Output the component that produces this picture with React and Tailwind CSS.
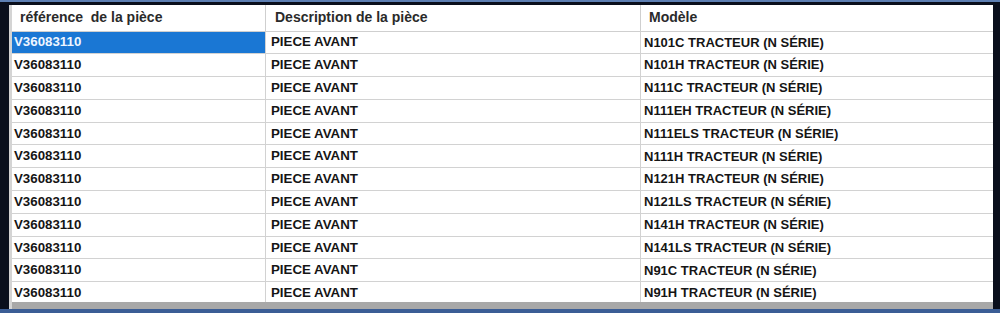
const models = [
  "N101C TRACTEUR (N SÉRIE)",
  "N101H TRACTEUR (N SÉRIE)",
  "N111C TRACTEUR (N SÉRIE)",
  "N111EH TRACTEUR (N SÉRIE)",
  "N111ELS TRACTEUR (N SÉRIE)",
  "N111H TRACTEUR (N SÉRIE)",
  "N121H TRACTEUR (N SÉRIE)",
  "N121LS TRACTEUR (N SÉRIE)",
  "N141H TRACTEUR (N SÉRIE)",
  "N141LS TRACTEUR (N SÉRIE)",
  "N91C TRACTEUR (N SÉRIE)",
  "N91H TRACTEUR (N SÉRIE)",
];

export default function App() {
  return (
    <div
      className="w-[1000px] h-[313px] bg-[#0a0f1c] flex flex-col overflow-hidden"
      style={{ fontFamily: '"Liberation Sans", Arial, sans-serif' }}
    >
      <div className="h-[2px] bg-[#5d7fb3] shrink-0" />
      <div className="h-[3px] shrink-0" />
      <div className="flex flex-1 min-h-0">
        <div className="w-[9px] shrink-0" />
        <div className="w-[3px] bg-[#d4d4d4] shrink-0" />
        <div className="flex-1 flex flex-col bg-white min-w-0">
          <div className="flex-1 min-h-0 overflow-hidden grid grid-cols-[254px_375px_1fr] content-start">
            <div className="h-[26.5px] flex items-center pl-[8px] border-b border-r border-[#cfcfcf] text-[14px] font-bold text-[#2a2a2a] whitespace-pre">
              {"référence  de la pièce"}
            </div>
            <div className="h-[26.5px] flex items-center pl-[9px] border-b border-r border-[#cfcfcf] text-[14px] font-bold text-[#2a2a2a]">
              Description de la pièce
            </div>
            <div className="h-[26.5px] flex items-center pl-[8px] border-b border-[#cfcfcf] text-[14px] font-bold text-[#2a2a2a]">
              Modèle
            </div>
            {models.map((m, i) => (
              <Row key={m} model={m} selected={i === 0} />
            ))}
          </div>
          <div className="h-[7px] bg-[#a8a8a8] shrink-0" />
        </div>
        <div className="w-[7px] shrink-0" />
      </div>
      <div className="h-[4px] bg-[#3b5d95] shrink-0" />
    </div>
  );
}

function Row({ model, selected }) {
  return (
    <>
      <div
        className={
          "h-[22.8px] flex items-center pl-[2px] border-b border-r border-[#d2d2d2] text-[13.3px] font-bold " +
          (selected ? "bg-[#1a77d4] text-[#eef5ff]" : "text-[#151515]")
        }
      >
        V36083110
      </div>
      <div className="h-[22.8px] flex items-center pl-[5px] border-b border-r border-[#d2d2d2] text-[13.3px] font-bold text-[#151515]">
        PIECE AVANT
      </div>
      <div className="h-[22.8px] flex items-center pl-[3px] border-b border-[#d2d2d2] text-[13px] font-bold text-[#151515]">
        {model}
      </div>
    </>
  );
}
